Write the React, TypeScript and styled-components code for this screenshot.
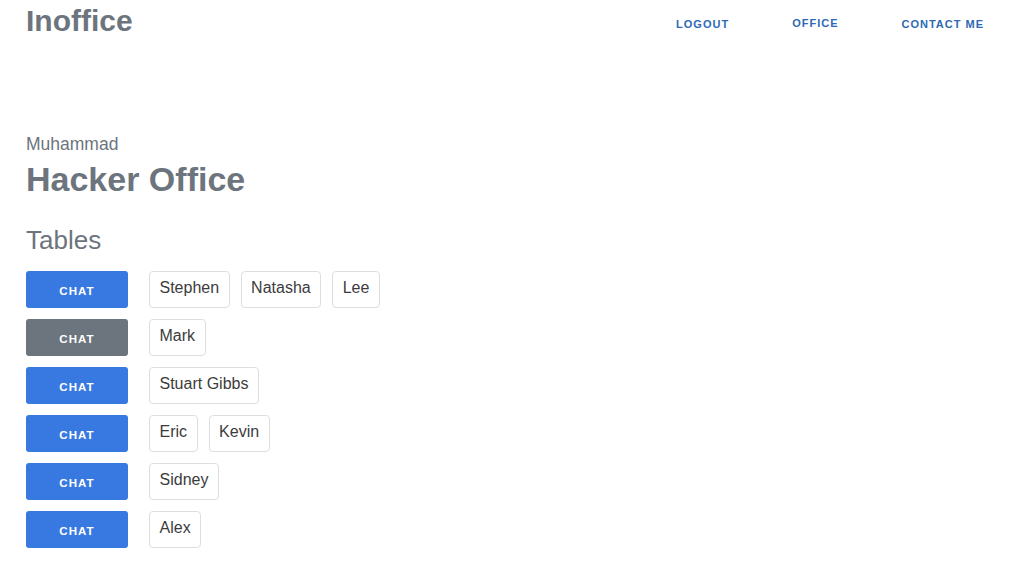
import styled, { createGlobalStyle } from 'styled-components';

const GlobalStyle = createGlobalStyle`
  body {
    margin: 0;
    background: #ffffff;
    font-family: 'Liberation Sans', Arial, sans-serif;
  }
`;

const tables = [
  { active: true, people: ['Stephen', 'Natasha', 'Lee'] },
  { active: false, people: ['Mark'] },
  { active: true, people: ['Stuart Gibbs'] },
  { active: true, people: ['Eric', 'Kevin'] },
  { active: true, people: ['Sidney'] },
  { active: true, people: ['Alex'] },
];

const App = () => {
  return (
    <>
      <GlobalStyle />
      <Header>
        <Brand>Inoffice</Brand>
        <Nav>
          <NavLink href='#'>Logout</NavLink>
          <NavLink href='#' $raised>
            Office
          </NavLink>
          <NavLink href='#'>Contact Me</NavLink>
        </Nav>
      </Header>

      <Main>
        <UserName>Muhammad</UserName>
        <OfficeName>Hacker Office</OfficeName>
        <SectionTitle>Tables</SectionTitle>

        <TableList>
          {tables.map((table, i) => (
            <TableRow key={i}>
              <ChatButton $active={table.active}>Chat</ChatButton>
              <People>
                {table.people.map((person) => (
                  <Chip key={person}>{person}</Chip>
                ))}
              </People>
            </TableRow>
          ))}
        </TableList>
      </Main>
    </>
  );
};

export default App;

const Header = styled.header`
  height: 41px;
  padding: 0 36px 0 26px;
  display: flex;
  justify-content: space-between;
  align-items: center;
`;

const Brand = styled.div`
  font-size: 30px;
  line-height: 30px;
  font-weight: 700;
  color: #6c747d;
`;

const Nav = styled.nav`
  display: flex;
  align-items: center;
  gap: 63px;
  margin-top: 6px;
`;

const NavLink = styled.a<{ $raised?: boolean }>`
  font-size: 11px;
  line-height: 14px;
  font-weight: 700;
  letter-spacing: 1px;
  text-transform: uppercase;
  text-decoration: none;
  color: #2d6ab3;
  position: relative;
  top: ${({ $raised }) => ($raised ? '-1px' : '0')};
`;

const Main = styled.main`
  padding: 93px 26px 0 26px;
`;

const UserName = styled.div`
  font-size: 17.5px;
  line-height: 20px;
  color: #6c747d;
`;

const OfficeName = styled.h1`
  margin: 5px 0 0 0;
  font-size: 34px;
  line-height: 40px;
  font-weight: 700;
  color: #6c747d;
`;

const SectionTitle = styled.h2`
  margin: 26px 0 0 0;
  font-size: 26px;
  line-height: 30px;
  font-weight: 400;
  color: #6c747d;
`;

const TableList = styled.div`
  margin-top: 16px;
  display: flex;
  flex-direction: column;
  gap: 11px;
`;

const TableRow = styled.div`
  display: flex;
  align-items: center;
  gap: 21px;
`;

const ChatButton = styled.button<{ $active: boolean }>`
  width: 102px;
  height: 37px;
  border: none;
  border-radius: 3px;
  background: ${({ $active }) => ($active ? '#3779e1' : '#6c757e')};
  color: #ffffff;
  font-family: 'Liberation Sans', Arial, sans-serif;
  font-size: 11.5px;
  font-weight: 700;
  letter-spacing: 1.1px;
  text-transform: uppercase;
  padding: 2px 0 0 0;
  cursor: pointer;
`;

const People = styled.div`
  display: flex;
  gap: 11px;
`;

const Chip = styled.span`
  height: 37px;
  box-sizing: border-box;
  padding: 0 9.5px 3px 9.5px;
  border: 1px solid #dedede;
  border-radius: 4px;
  display: flex;
  align-items: center;
  font-size: 16px;
  color: #3c3c3c;
`;
